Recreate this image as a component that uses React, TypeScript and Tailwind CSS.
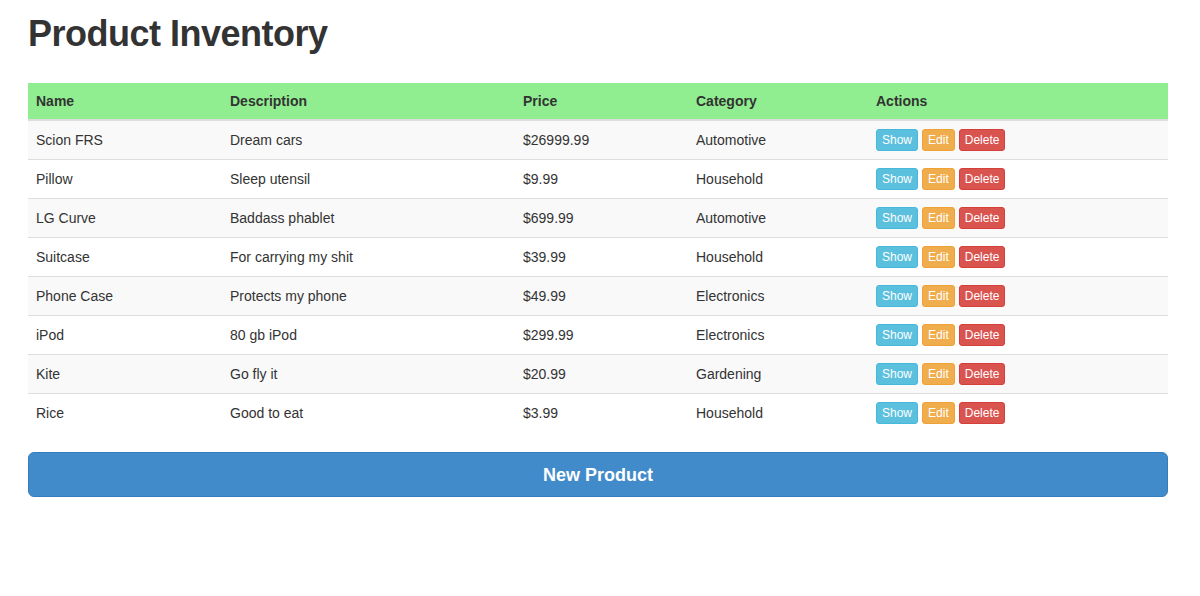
const products = [
  { name: 'Scion FRS', description: 'Dream cars', price: '$26999.99', category: 'Automotive' },
  { name: 'Pillow', description: 'Sleep utensil', price: '$9.99', category: 'Household' },
  { name: 'LG Curve', description: 'Baddass phablet', price: '$699.99', category: 'Automotive' },
  { name: 'Suitcase', description: 'For carrying my shit', price: '$39.99', category: 'Household' },
  { name: 'Phone Case', description: 'Protects my phone', price: '$49.99', category: 'Electronics' },
  { name: 'iPod', description: '80 gb iPod', price: '$299.99', category: 'Electronics' },
  { name: 'Kite', description: 'Go fly it', price: '$20.99', category: 'Gardening' },
  { name: 'Rice', description: 'Good to eat', price: '$3.99', category: 'Household' },
];

function ActionButtons() {
  return (
    <div className="flex gap-[4px]">
      <button className="h-[22px] rounded-[3px] border border-[#46b8da] bg-[#5bc0de] px-[5px] text-[12px] leading-[18px] text-white">
        Show
      </button>
      <button className="h-[22px] rounded-[3px] border border-[#eea236] bg-[#f0ad4e] px-[5px] text-[12px] leading-[18px] text-white">
        Edit
      </button>
      <button className="h-[22px] rounded-[3px] border border-[#d43f3a] bg-[#d9534f] px-[5px] text-[12px] leading-[18px] text-white">
        Delete
      </button>
    </div>
  );
}

export default function App() {
  return (
    <div className="min-h-[596px] bg-white pl-[28px] pr-[32px] text-[14px] leading-[20px] text-[#333] [font-family:'Liberation_Sans',Arial,sans-serif]">
      <h1 className="pt-[14px] text-[36px] font-bold leading-[40px] tracking-[-0.5px]">Product Inventory</h1>

      <table className="mt-[29px] w-full border-collapse">
        <thead>
          <tr className="bg-[#90ee90] text-left">
            <th className="w-[194px] border-b-2 border-[#ddd] px-2 py-2 font-bold">Name</th>
            <th className="w-[293px] border-b-2 border-[#ddd] px-2 py-2 font-bold">Description</th>
            <th className="w-[173px] border-b-2 border-[#ddd] px-2 py-2 font-bold">Price</th>
            <th className="w-[180px] border-b-2 border-[#ddd] px-2 py-2 font-bold">Category</th>
            <th className="border-b-2 border-[#ddd] px-2 py-2 font-bold">Actions</th>
          </tr>
        </thead>
        <tbody>
          {products.map((p, i) => (
            <tr key={p.name} className={i % 2 === 0 ? 'bg-[#f9f9f9]' : 'bg-white'}>
              <td className="border-t border-[#ddd] px-2 py-2 align-middle">{p.name}</td>
              <td className="border-t border-[#ddd] px-2 py-2 align-middle">{p.description}</td>
              <td className="border-t border-[#ddd] px-2 py-2 align-middle">{p.price}</td>
              <td className="border-t border-[#ddd] px-2 py-2 align-middle">{p.category}</td>
              <td className="border-t border-[#ddd] px-2 py-2 align-middle">
                <ActionButtons />
              </td>
            </tr>
          ))}
        </tbody>
      </table>

      <button className="mt-[20px] h-[45px] w-full rounded-[6px] border border-[#357ebd] bg-[#428bca] text-[18px] font-bold text-white">
        New Product
      </button>
    </div>
  );
}
